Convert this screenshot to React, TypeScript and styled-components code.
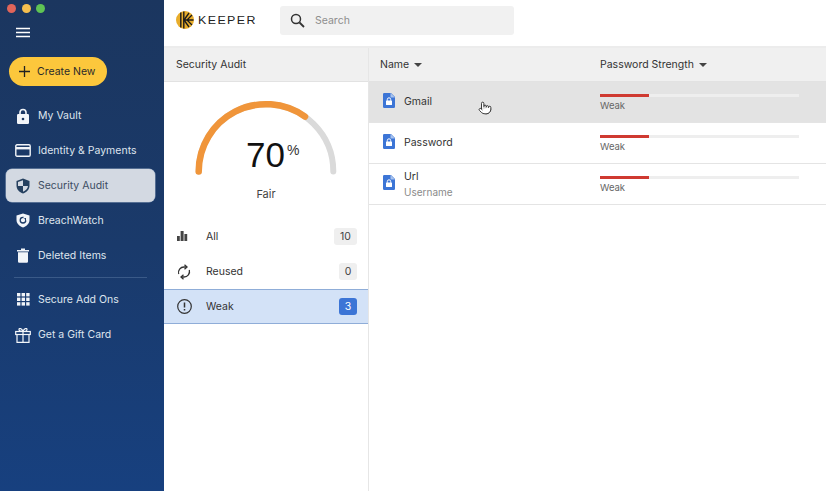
import React from "react";
import styled, { createGlobalStyle } from "styled-components";
import { Pointer } from "lucide-react";

const Global = createGlobalStyle`
  html, body { margin: 0; padding: 0; background: #fff; }
  body { font-family: "Inter", "Liberation Sans", sans-serif; }
  * { box-sizing: border-box; }
`;
const Page = styled.div`
  width: 826px; height: 491px; display: flex; overflow: hidden; position: relative;
`;
const Sidebar = styled.aside`
  width: 164px; flex: none; display: flex; flex-direction: column;
  background: linear-gradient(180deg, #1b365f 0%, #1a3a6b 50%, #17407f 100%);
`;
const Lights = styled.div`
  display: flex; gap: 5.5px; padding: 4px 0 0 7px; height: 25px;
`;
const Light = styled.span<{ $c: string }>`
  width: 9px; height: 9px; border-radius: 50%; background: ${p => p.$c};
`;
const Burger = styled.div`
  height: 32px; padding-left: 16px; display: flex; align-items: flex-start; padding-top: 2px;
`;
const CreateBtn = styled.button`
  margin-left: 9px; width: 98px; height: 29px; border: 0; border-radius: 15px;
  background: #fcc73c; color: #2a2a2a; display: flex; align-items: center; gap: 6px;
  padding: 0 0 0 9px; font: 400 10.5px "Inter", sans-serif;
`;
const Nav = styled.nav`
  display: flex; flex-direction: column; margin-top: 12px;
`;
const NavItem = styled.div<{ $active?: boolean }>`
  height: 35px; margin: 0 9px 0 6px; padding-left: 9px; display: flex; align-items: center; gap: 7px;
  border-radius: 6px; font-size: 10.5px;
  color: ${p => (p.$active ? "#3d4d63" : "#dfe5ee")};
  background: ${p => (p.$active ? "#d3d9e2" : "transparent")};
  ${p => (p.$active ? "height: 33px; margin-top: 1px; margin-bottom: 1px; box-shadow: 0 0 0 .5px #8fa3bd;" : "")}
`;
const IconSlot = styled.span`
  width: 16px; height: 16px; flex: none; display: flex; align-items: center; justify-content: center;
`;
const Divider = styled.hr`
  width: 133px; margin: 4px 0 4px 14px; border: 0; border-top: 1px solid #3a5a88;
`;
const Main = styled.div`
  flex: 1; display: flex; flex-direction: column; min-width: 0;
`;
const TopBar = styled.header`
  height: 48px; flex: none; display: flex; align-items: flex-start; border-bottom: 2px solid #ececec;
`;
const Logo = styled.div`
  width: 116px; height: 40px; padding: 11px 0 0 12px; display: flex; gap: 4px; align-items: flex-start;
`;
const Wordmark = styled.span`
  font: 400 11.5px/18px "Liberation Sans", sans-serif; color: #222; letter-spacing: 1.3px; transform: scaleX(1.08); transform-origin: left;
`;
const Search = styled.div`
  margin-top: 6px; width: 234px; height: 29px; background: #f1f1f1; border-radius: 3px;
  display: flex; align-items: center; gap: 10px; padding-left: 10px; color: #8e8e8e; font-size: 10.5px;
`;
const Columns = styled.div`
  flex: 1; display: flex; min-height: 0;
`;
const Panel = styled.section`
  width: 205px; flex: none; border-right: 1px solid #e6e6e6; display: flex; flex-direction: column;
`;
const HeadCell = styled.div`
  height: 34px; flex: none; background: #f0f0f0; border-bottom: 1px solid #e2e2e2; display: flex; align-items: center;
  padding-left: 12px; font-size: 10.5px; color: #333;
`;
const Gauge = styled.div`
  height: 137px; flex: none; position: relative; display: flex; flex-direction: column; align-items: center;
`;
const GaugeSvg = styled.svg`
  width: 204px; height: 136px; display: block;
`;
const Score = styled.div`
  position: absolute; top: 51px; left: 82px; font: 400 35px/44px "Liberation Sans", sans-serif; color: #111;
`;
const Pct = styled.sup`
  position: absolute; left: 41px; top: 10px; font-size: 14px; line-height: 15px; vertical-align: baseline; color: #333;
`;
const Fair = styled.div`
  position: absolute; top: 105px; left: 0; right: 0; text-align: center; font-size: 11px; color: #444;
`;
const FilterRow = styled.div<{ $active?: boolean }>`
  height: 35px; display: flex; align-items: center; padding: 0 11px 0 12px; font-size: 10.5px; color: #333; gap: 14px;
  ${p => (p.$active ? "background: #d3e2f7; border-top: 1px solid #8fadd8; border-bottom: 1px solid #8fadd8;" : "")}
`;
const FilterLabel = styled.span`
  flex: 1;
`;
const Badge = styled.span<{ $active?: boolean; $wide?: boolean }>`
  height: 17px; min-width: ${p => (p.$wide ? "23px" : "18px")}; padding: 0 4px; border-radius: 3px; display: flex; align-items: center; justify-content: center;
  font-size: 10.5px; background: ${p => (p.$active ? "#3c75d6" : "#efefef")}; color: ${p => (p.$active ? "#fff" : "#444")};
`;
const ListPane = styled.section`
  flex: 1; display: flex; flex-direction: column; min-width: 0;
`;
const TableHead = styled.div`
  height: 34px; flex: none; background: #f0f0f0; border-bottom: 1px solid #e2e2e2;
  display: grid; grid-template-columns: 231px 1fr; align-items: center; font-size: 10.5px; color: #333;
`;
const HeadLabel = styled.div<{ $first?: boolean }>`
  display: flex; align-items: center; gap: 5px; padding-left: ${p => (p.$first ? "11px" : "0")};
`;
const Caret = styled.span`
  width: 0; height: 0; border-left: 4px solid transparent; border-right: 4px solid transparent; border-top: 4px solid #444;
`;
const Row = styled.div<{ $hover?: boolean }>`
  height: 41px; flex: none; display: grid; grid-template-columns: 231px 1fr; align-items: center;
  border-bottom: 1px solid #e4e4e4; background: ${p => (p.$hover ? "#e3e3e3" : "#fff")};
`;
const NameCell = styled.div`
  display: flex; align-items: center; gap: 9px; padding-left: 14px;
`;
const RecordSlot = styled.span`
  display: flex; margin-bottom: 4px;
`;
const NameText = styled.div<{ $single?: boolean }>`
  display: flex; flex-direction: column; gap: 3px; font-size: 10.5px; color: #333;
  padding-bottom: ${p => (p.$single ? "2px" : "0")};
`;
const Sub = styled.span`
  font-size: 10px; color: #8a8a8a;
`;
const Strength = styled.div`
  padding-top: 1px; font-size: 9.5px; color: #666;
`;
const Track = styled.div`
  width: 199px; height: 3px; background: #eeeeee; margin-bottom: 3px;
`;
const Fill = styled.div`
  width: 49px; height: 3px; background: #cf3a31;
`;
const Cursor = styled.div`
  position: absolute; left: 478px; top: 101px; line-height: 0;
`;

const W = "#f2f5f9";
const Menu = () => (
  <svg width="14" height="12" viewBox="0 0 14 12"><path d="M0 1.500h14M0 5.500h14M0 9.500h14" stroke="#fff" strokeWidth="1.600" /></svg>
);
const Lock = () => (
  <svg width="14" height="16" viewBox="0 0 14 16"><path d="M4 7V4.500a3 3 0 0 1 6 0V7" fill="none" stroke={W} strokeWidth="1.600" /><rect x="1" y="6" width="12" height="10" rx="1.200" fill={W} /><circle cx="7" cy="11" r="1.300" fill="#1b365f" /></svg>
);
const Card = () => (
  <svg width="16" height="13" viewBox="0 0 16 13"><rect x=".8" y=".8" width="14.400" height="11.400" rx="1.200" fill="none" stroke={W} strokeWidth="1.400" /><rect x="1" y="3" width="14" height="2.400" fill={W} /></svg>
);
const Shield = () => (
  <svg width="14" height="16" viewBox="0 0 14 16"><path d="M7 .5 13.500 3v4.500c0 3.800-2.800 6.800-6.500 8-3.700-1.200-6.500-4.200-6.500-8V3z" fill="#25405f" /><path d="M7 2.200v5.800h5c-.3 2.800-2.400 4.800-5 5.800V8H2V3.900z" fill="#d3d9e2" /></svg>
);
const Breach = () => (
  <svg width="14" height="15" viewBox="0 0 14 15"><path d="M7 .5 13.500 2.500v4.500c0 3.500-2.800 6-6.500 7.500C3.300 13 .5 10.500.5 7V2.500z" fill={W} /><circle cx="7" cy="7.200" r="2.800" fill="none" stroke="#1b3a66" strokeWidth="1.300" /><path d="M7.500 4.500h3v3" fill="none" stroke={W} strokeWidth="1" /></svg>
);
const Trash = () => (
  <svg width="12" height="15" viewBox="0 0 12 15"><path d="M0 2h12v1.400H0zM4 .5h4V2H4z" fill={W} /><path d="M1 4.200h10V13.500a1.200 1.200 0 0 1-1.200 1.200H2.200A1.200 1.200 0 0 1 1 13.500z" fill={W} /></svg>
);
const Grid = () => (
  <svg width="13" height="13" viewBox="0 0 13 13" fill={W}>
    {[0, 4.600, 9.200].flatMap(x => [0, 4.600, 9.200].map(y => <rect key={`${x}-${y}`} x={x} y={y} width="3.400" height="3.400" />))}
  </svg>
);
const Gift = () => (
  <svg width="16" height="16" viewBox="0 0 16 16" fill="none" stroke={W} strokeWidth="1.200"><rect x=".7" y="4.500" width="14.600" height="3" /><path d="M2 7.500V15.300h12V7.500M8 4.500V15.300M8 4.500C6 4.500 4 3.800 4 2.400 4 1 6.800 1 8 4.500c1.200-3.500 4-3.500 4-2.100 0 1.400-2 2.100-4 2.100z" /></svg>
);
const KeeperMark = () => (
  <svg width="18" height="18" viewBox="0 0 18 18"><circle cx="9" cy="9" r="9" fill="#e8ad2b" /><path d="M4.800 1.500V16.500" stroke="#1a1a1a" strokeWidth="1.400" /><path d="M7.800 0.500V17.500" stroke="#1a1a1a" strokeWidth="1.400" /><path d="M8 9 13 2M8 9l5 7M8 9h9.500M11 9l5-5M11 9l5 5" stroke="#1a1a1a" strokeWidth="1.300" fill="none" /></svg>
);
const SearchIcon = () => (
  <svg width="15" height="15" viewBox="0 0 15 15" fill="none" stroke="#333" strokeWidth="1.500"><circle cx="6" cy="6" r="4.500" /><path d="M9.500 9.500 14 14" strokeWidth="1.800" /></svg>
);
const Bars = () => (
  <svg width="16" height="11" viewBox="0 0 16 11" fill="#444"><rect x="1" y="5" width="2.800" height="5" /><rect x="4.600" width="3" height="10" /><rect x="8.400" y="3" width="2.800" height="7" /></svg>
);
const Sync = () => (
  <svg width="14" height="16" viewBox="0 0 14 16" fill="none" stroke="#333" strokeWidth="1.300"><path d="M1.700 10A5.500 5.500 0 0 1 7 3h2M12.300 6A5.500 5.500 0 0 1 7 13H5" /><path d="M7.500 .8 10 3 7.500 5.200M6.500 10.800 4 13l2.500 2.200" /></svg>
);
const Alert = () => (
  <svg width="15" height="15" viewBox="0 0 15 15" fill="none" stroke="#333" strokeWidth="1.200"><circle cx="7.500" cy="7.500" r="6.800" /><path d="M7.500 3.500V8.500M7.500 10v1.500" strokeWidth="1.500" /></svg>
);
const RecordIcon = () => (
  <svg width="12" height="15" viewBox="0 0 12 15"><path d="M1.200 0H8l4 4v9.800a1.200 1.200 0 0 1-1.200 1.200H1.200A1.200 1.200 0 0 1 0 13.800V1.200A1.200 1.200 0 0 1 1.200 0z" fill="#3c75d6" /><path d="M7.500 0v4.500H12z" fill="#a9c4ee" /><rect x="3" y="7.500" width="6" height="4.500" rx=".6" fill="#fff" /><path d="M4.300 7.800V6.500a1.700 1.700 0 0 1 3.400 0v1.300" fill="none" stroke="#fff" strokeWidth="1" /></svg>
);

const nav = [
  { label: "My Vault", icon: <Lock /> },
  { label: "Identity & Payments", icon: <Card /> },
  { label: "Security Audit", icon: <Shield />, active: true },
  { label: "BreachWatch", icon: <Breach /> },
  { label: "Deleted Items", icon: <Trash /> },
];
const rows = [
  { name: "Gmail", hover: true },
  { name: "Password" },
  { name: "Url", sub: "Username" },
];

export default function App() {
  return (
    <Page>
      <Global />
      <Sidebar>
        <Lights>
          <Light $c="#e0655a" />
          <Light $c="#f5bf4f" />
          <Light $c="#5fc454" />
        </Lights>
        <Burger><Menu /></Burger>
        <CreateBtn>
          <svg width="13" height="13" viewBox="0 0 13 13"><path d="M6.500 1v11M1 6.500h11" stroke="#222" strokeWidth="1.300" /></svg>
          Create New
        </CreateBtn>
        <Nav>
          {nav.map(n => (
            <NavItem key={n.label} $active={n.active}>
              <IconSlot>{n.icon}</IconSlot>
              {n.label}
            </NavItem>
          ))}
          <Divider />
          <NavItem><IconSlot><Grid /></IconSlot>Secure Add Ons</NavItem>
          <NavItem><IconSlot><Gift /></IconSlot>Get a Gift Card</NavItem>
        </Nav>
      </Sidebar>
      <Main>
        <TopBar>
          <Logo><KeeperMark /><Wordmark>KEEPER</Wordmark></Logo>
          <Search><SearchIcon />Search</Search>
        </TopBar>
        <Columns>
          <Panel>
            <HeadCell>Security Audit</HeadCell>
            <Gauge>
              <GaugeSvg viewBox="0 0 204 136">
                <path d="M34.700 89.500A67.300 67.300 0 0 1 169.300 89.500" fill="none" stroke="#dadada" strokeWidth="6" strokeLinecap="round" />
                <path d="M34.700 89.500A67.300 67.300 0 0 1 141 34.600" fill="none" stroke="#f0953a" strokeWidth="6.500" strokeLinecap="round" />
              </GaugeSvg>
              <Score>70<Pct>%</Pct></Score>
              <Fair>Fair</Fair>
            </Gauge>
            <FilterRow><IconSlot><Bars /></IconSlot><FilterLabel>All</FilterLabel><Badge $wide>10</Badge></FilterRow>
            <FilterRow><IconSlot><Sync /></IconSlot><FilterLabel>Reused</FilterLabel><Badge>0</Badge></FilterRow>
            <FilterRow $active><IconSlot><Alert /></IconSlot><FilterLabel>Weak</FilterLabel><Badge $active>3</Badge></FilterRow>
          </Panel>
          <ListPane>
            <TableHead>
              <HeadLabel $first>Name <Caret /></HeadLabel>
              <HeadLabel>Password Strength <Caret /></HeadLabel>
            </TableHead>
            {rows.map(r => (
              <Row key={r.name} $hover={r.hover}>
                <NameCell>
                  <RecordSlot><RecordIcon /></RecordSlot>
                  <NameText $single={!r.sub}>{r.name}{r.sub && <Sub>{r.sub}</Sub>}</NameText>
                </NameCell>
                <Strength>
                  <Track><Fill /></Track>
                  Weak
                </Strength>
              </Row>
            ))}
          </ListPane>
        </Columns>
      </Main>
      <Cursor><Pointer size={14} color="#222" fill="#fff" strokeWidth={1.5} /></Cursor>
    </Page>
  );
}
